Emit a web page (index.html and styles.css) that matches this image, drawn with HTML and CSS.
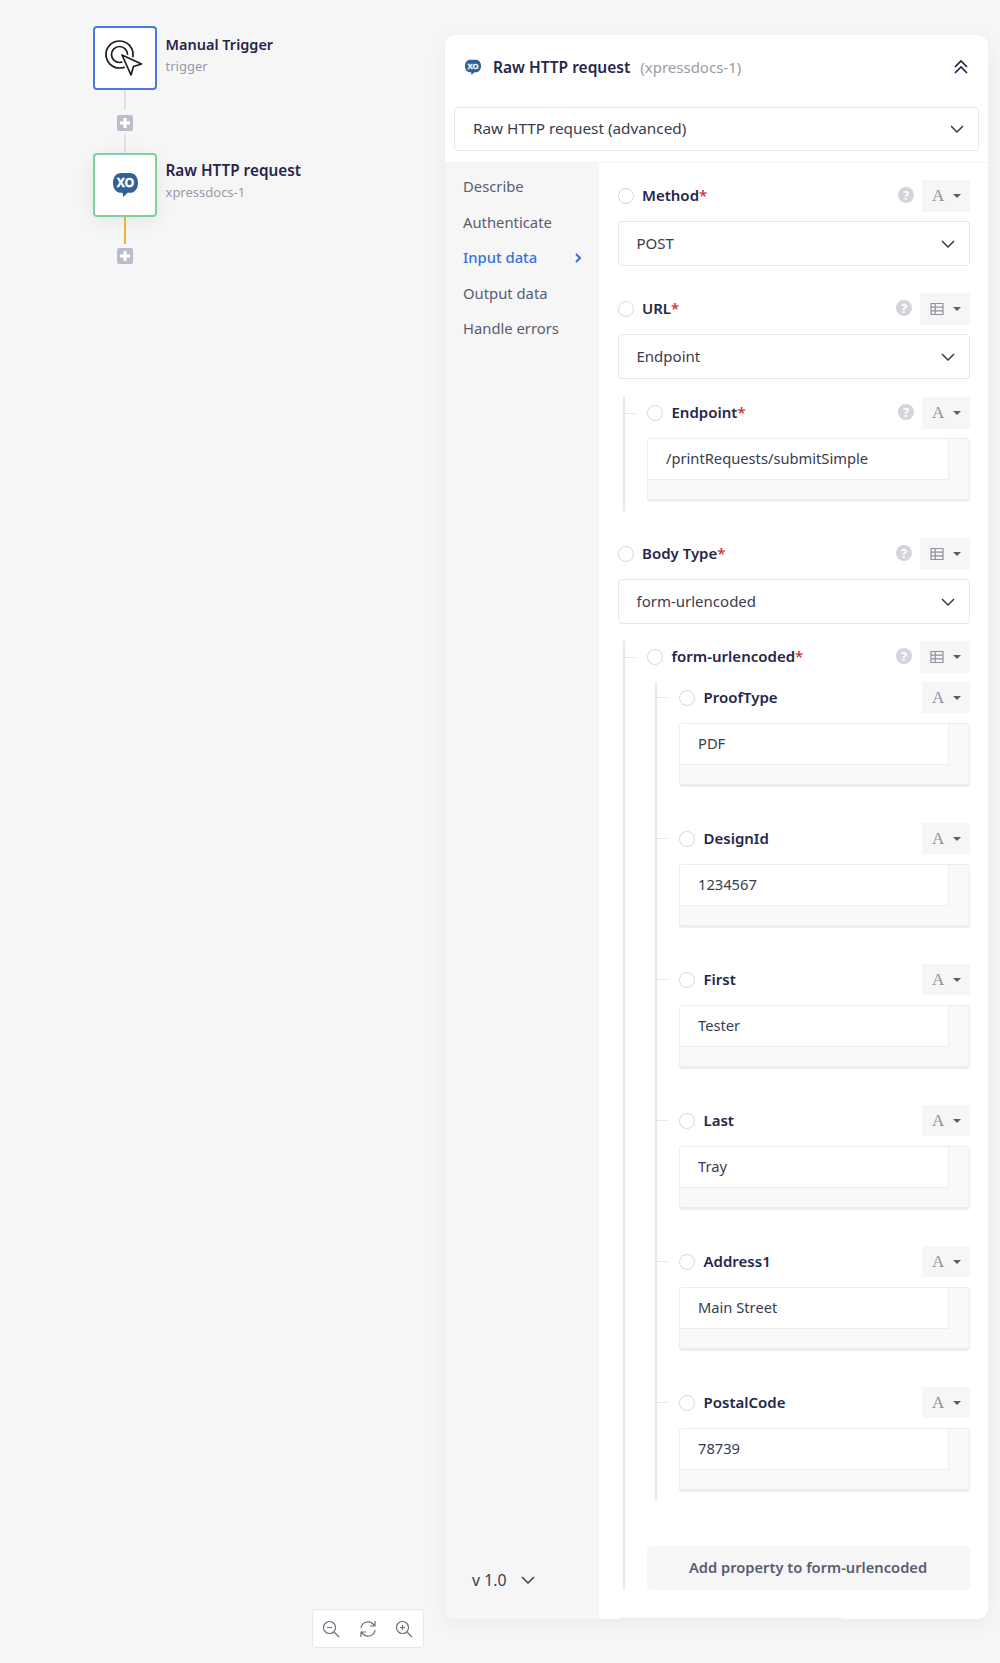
FILE: index.html
```html
<!DOCTYPE html>
<html lang="en">
<head>
    <meta charset="UTF-8">
    <title>Raw HTTP request</title>
    <link rel="stylesheet" href="styles.css">
</head>
<body>
    <!-- shared icons -->
    <svg class="defs" width="0" height="0">
        <symbol id="chevron" viewBox="0 0 14 8"><polyline points="1,1 7,7 13,1" fill="none" stroke="currentColor" stroke-width="1.5"/></symbol>
        <symbol id="grid" viewBox="0 0 14 14"><path d="M1 1.500h12v11H1zM1 5.200h12M1 8.900h12M5.200 1.500v11" fill="none" stroke="currentColor" stroke-width="1.200"/></symbol>
        <symbol id="plus" viewBox="0 0 16 16"><rect width="16" height="16" rx="2" fill="#bcbdca"/><path d="M3 8h10M8 3v10" stroke="#fff" stroke-width="3"/></symbol>
        <symbol id="bubble" viewBox="0 0 24 24"><path d="M8 1h8c5 0 8 4 8 9.500S21 20 16 20h-2l-4 4-1-4H8c-5 0-8-4-8-9.500S3 1 8 1z" fill="#2f6098"/></symbol>
    </svg>

    <div class="canvas">
        <div class="node node-trigger">
            <svg width="60" height="60" viewBox="0 0 60 60">
                <circle cx="24.500" cy="26.500" r="13.500" fill="none" stroke="#1c1c1c" stroke-width="1.700"/>
                <circle cx="24.500" cy="26.500" r="8" fill="none" stroke="#1c1c1c" stroke-width="1.700"/>
                <path d="M27 27l19.500 9-8 2.500-2.500 8.500z" fill="#fff" stroke="#fff" stroke-width="5"/>
                <path d="M27 27l19.500 9-8 2.500-2.500 8.500z" fill="#fff" stroke="#1c1c1c" stroke-width="1.700" stroke-linejoin="round"/>
            </svg>
        </div>
        <div class="node-label label-trigger">
            <strong>Manual Trigger</strong>
            <span>trigger</span>
        </div>
        <div class="link link-a"></div>
        <svg class="add add-a"><use href="#plus"/></svg>
        <div class="link link-b"></div>
        <div class="node node-http">
            <svg class="xo-big" viewBox="0 0 24 24">
                <use href="#bubble"/>
                <text x="12" y="14.500" text-anchor="middle" class="xo-text">XO</text>
            </svg>
        </div>
        <div class="node-label label-http">
            <strong>Raw HTTP request</strong>
            <span>xpressdocs-1</span>
        </div>
        <div class="link link-c"></div>
        <svg class="add add-b"><use href="#plus"/></svg>

        <div class="zoom-bar">
            <div class="zoom-btn">
                <svg width="18" height="18" viewBox="0 0 18 18"><circle cx="7.500" cy="7.500" r="6" class="ic"/><path d="M5 7.500h5M12 12l5 5" class="ic"/></svg>
            </div>
            <div class="zoom-btn">
                <svg width="18" height="18" viewBox="0 0 18 18"><path d="M2 8a7 7 0 0 1 12-4l2 2M16 10a7 7 0 0 1-12 4l-2-2M16 1v5h-5M2 17v-5h5" class="ic"/></svg>
            </div>
            <div class="zoom-btn">
                <svg width="18" height="18" viewBox="0 0 18 18"><circle cx="7.500" cy="7.500" r="6" class="ic"/><path d="M5 7.500h5M7.500 5v5M12 12l5 5" class="ic"/></svg>
            </div>
        </div>
    </div>

    <div class="panel">
        <div class="panel-head">
            <svg class="xo-small" viewBox="0 0 24 24">
                <use href="#bubble"/>
                <text x="12" y="14.500" text-anchor="middle" class="xo-text">XO</text>
            </svg>
            <span class="panel-title">Raw HTTP request</span>
            <span class="panel-sub">(xpressdocs-1)</span>
            <svg class="collapse" width="16" height="16" viewBox="0 0 16 16"><path d="M2 8l6-6 6 6M2 14l6-6 6 6" fill="none" stroke="#1f2041" stroke-width="1.600"/></svg>
        </div>
        <div class="select select-action">
            <span>Raw HTTP request (advanced)</span>
            <svg class="chev"><use href="#chevron"/></svg>
        </div>

        <div class="panel-body">
            <div class="side">
                <a class="side-item">Describe</a>
                <a class="side-item">Authenticate</a>
                <a class="side-item active">Input data
                    <svg width="6" height="10" viewBox="0 0 6 10"><polyline points="1,1 5,5 1,9" fill="none" stroke="#3272e0" stroke-width="2"/></svg>
                </a>
                <a class="side-item">Output data</a>
                <a class="side-item">Handle errors</a>
                <div class="version">v 1.0 <svg class="chev"><use href="#chevron"/></svg></div>
            </div>

            <div class="main">
                <div class="row">
                    <span class="radio"></span>
                    <span class="label">Method<i>*</i></span>
                    <span class="help">?</span>
                    <span class="type-btn"><b class="type-a">A</b><u class="caret"></u></span>
                </div>
                <div class="select select-field">
                    <span>POST</span>
                    <svg class="chev"><use href="#chevron"/></svg>
                </div>

                <div class="row row-next">
                    <span class="radio"></span>
                    <span class="label">URL<i>*</i></span>
                    <span class="help">?</span>
                    <span class="type-btn wide"><svg class="grid"><use href="#grid"/></svg><u class="caret"></u></span>
                </div>
                <div class="select select-field">
                    <span>Endpoint</span>
                    <svg class="chev"><use href="#chevron"/></svg>
                </div>

                <div class="sub sub-endpoint">
                    <div class="row">
                        <span class="tick"></span>
                        <span class="radio"></span>
                        <span class="label">Endpoint<i>*</i></span>
                        <span class="help">?</span>
                        <span class="type-btn"><b class="type-a">A</b><u class="caret"></u></span>
                    </div>
                    <div class="box box-one"><div class="box-in">/printRequests/submitSimple</div></div>
                </div>

                <div class="row row-next">
                    <span class="radio"></span>
                    <span class="label">Body Type<i>*</i></span>
                    <span class="help">?</span>
                    <span class="type-btn wide"><svg class="grid"><use href="#grid"/></svg><u class="caret"></u></span>
                </div>
                <div class="select select-field">
                    <span>form-urlencoded</span>
                    <svg class="chev"><use href="#chevron"/></svg>
                </div>

                <div class="sub sub-form">
                    <div class="row">
                        <span class="tick"></span>
                        <span class="radio"></span>
                        <span class="label">form-urlencoded<i>*</i></span>
                        <span class="help">?</span>
                        <span class="type-btn wide"><svg class="grid"><use href="#grid"/></svg><u class="caret"></u></span>
                    </div>

                    <div class="sub sub-props">
                        <div class="prop">
                            <div class="row">
                                <span class="tick"></span>
                                <span class="radio"></span>
                                <span class="label">ProofType</span>
                                <span class="type-btn push"><b class="type-a">A</b><u class="caret"></u></span>
                            </div>
                            <div class="box"><div class="box-in">PDF</div></div>
                        </div>
                        <div class="prop">
                            <div class="row">
                                <span class="tick"></span>
                                <span class="radio"></span>
                                <span class="label">DesignId</span>
                                <span class="type-btn push"><b class="type-a">A</b><u class="caret"></u></span>
                            </div>
                            <div class="box"><div class="box-in">1234567</div></div>
                        </div>
                        <div class="prop">
                            <div class="row">
                                <span class="tick"></span>
                                <span class="radio"></span>
                                <span class="label">First</span>
                                <span class="type-btn push"><b class="type-a">A</b><u class="caret"></u></span>
                            </div>
                            <div class="box"><div class="box-in">Tester</div></div>
                        </div>
                        <div class="prop">
                            <div class="row">
                                <span class="tick"></span>
                                <span class="radio"></span>
                                <span class="label">Last</span>
                                <span class="type-btn push"><b class="type-a">A</b><u class="caret"></u></span>
                            </div>
                            <div class="box"><div class="box-in">Tray</div></div>
                        </div>
                        <div class="prop">
                            <div class="row">
                                <span class="tick"></span>
                                <span class="radio"></span>
                                <span class="label">Address1</span>
                                <span class="type-btn push"><b class="type-a">A</b><u class="caret"></u></span>
                            </div>
                            <div class="box"><div class="box-in">Main Street</div></div>
                        </div>
                        <div class="prop">
                            <div class="row">
                                <span class="tick"></span>
                                <span class="radio"></span>
                                <span class="label">PostalCode</span>
                                <span class="type-btn push"><b class="type-a">A</b><u class="caret"></u></span>
                            </div>
                            <div class="box"><div class="box-in">78739</div></div>
                        </div>
                    </div>

                    <button class="add-prop">Add property to form-urlencoded</button>
                </div>

                <div class="scroll-edge"></div>
            </div>
        </div>
    </div>
</body>
</html>
```

FILE: styles.css
```css
body {
    margin: 0;
    height: 1663px;
    display: flex;
    background: #f6f6f7;
    font-family: "Noto Sans", Arial, sans-serif;
    font-size: 15px;
    color: #3a3b4f;
    overflow: hidden;
}
.defs {
    position: absolute;
}
.xo-text {
    font-family: "Liberation Sans", Arial, sans-serif;
    font-size: 11.500px;
    font-weight: 700;
    fill: #fff;
    stroke: #fff;
    stroke-width: 0.500;
}

/* flow diagram on the left */
.canvas {
    position: relative;
    width: 445px;
    flex: none;
}
.node {
    position: absolute;
    left: 93px;
    width: 64px;
    height: 64px;
    box-sizing: border-box;
    display: flex;
    align-items: center;
    justify-content: center;
    background: white;
    border-radius: 4px;
}
.node-trigger {
    top: 26px;
    border: 2px solid #4a78e8;
}
.node-http {
    top: 153px;
    border: 2px solid #7dd0a0;
    box-shadow: 0 4px 18px rgba(0, 0, 0, 0.07);
}
.xo-big {
    width: 25px;
    height: 25px;
    margin-top: -2px;
}
.node-label {
    position: absolute;
    left: 165.500px;
    white-space: nowrap;
}
.node-label strong {
    display: block;
    font-weight: 600;
    line-height: 22px;
    color: #25264a;
}
.node-label span {
    display: block;
    margin-top: 1px;
    font-size: 13px;
    line-height: 20px;
    color: #9a9aa8;
}
.label-trigger {
    top: 33px;
}
.label-trigger strong {
    font-size: 14.500px;
}
.label-http {
    top: 159px;
}
.label-http strong {
    font-size: 15.300px;
    margin-bottom: 1px;
}
.link {
    position: absolute;
    left: 124px;
    width: 2px;
    background: #e2e2e6;
}
.link-a {
    top: 90px;
    height: 20px;
}
.link-b {
    top: 134px;
    height: 19px;
}
.link-c {
    top: 217px;
    height: 27px;
    background: #f0b13c;
}
.add {
    position: absolute;
    left: 117px;
    width: 16px;
    height: 16px;
}
.add-a {
    top: 115px;
}
.add-b {
    top: 248px;
}
.zoom-bar {
    position: absolute;
    left: 312px;
    top: 1609px;
    display: flex;
    background: white;
    border: 1px solid #e8e8ec;
    border-radius: 3px;
}
.zoom-btn {
    width: 36.500px;
    height: 37px;
    display: flex;
    align-items: center;
    justify-content: center;
}
.ic {
    fill: none;
    stroke: #6c6d80;
    stroke-width: 1.200;
}

/* settings panel */
.panel {
    width: 543px;
    height: 1584px;
    margin-top: 35px;
    background: white;
    border-radius: 10px;
    box-shadow: 0 4px 20px rgba(0, 0, 0, 0.05);
    display: flex;
    flex-direction: column;
    overflow: hidden;
}
.panel-head {
    height: 63px;
    flex: none;
    padding: 0 19px 0 20px;
    display: flex;
    align-items: center;
    margin-bottom: 9px;
}
.xo-small {
    width: 16px;
    height: 16px;
    margin-right: 12px;
}
.panel-title {
    font-size: 15.500px;
    font-weight: 600;
    color: #25264a;
}
.panel-sub {
    margin-left: 10px;
    color: #9a9aa8;
}
.collapse {
    margin-left: auto;
}
.select {
    display: flex;
    align-items: center;
    justify-content: space-between;
    box-sizing: border-box;
    background: white;
    border: 1.500px solid #e6e6ec;
    border-radius: 4px;
    padding: 0 14px 0 18px;
}
.select span {
    padding-bottom: 2px;
}
.select-action {
    height: 44px;
    margin: 0 9px 11px 9px;
    flex: none;
    font-size: 15.300px;
}
.select-field {
    height: 45px;
    margin-top: 9px;
}
.chev {
    width: 14px;
    height: 8px;
    color: #3a3b4f;
}
.panel-body {
    flex: 1;
    display: flex;
    border-top: 1px solid #f2f2f4;
    min-height: 0;
}
.side {
    width: 154px;
    flex: none;
    box-sizing: border-box;
    padding: 6px 0 28px 18px;
    background: #f6f6f7;
    display: flex;
    flex-direction: column;
}
.side-item {
    height: 35.500px;
    line-height: 35.500px;
    display: flex;
    align-items: center;
    justify-content: space-between;
    padding-right: 18px;
    font-size: 14.800px;
    color: #5b5c70;
}
.side-item.active {
    color: #3272e0;
    font-weight: 500;
}
.version {
    margin-top: auto;
    margin-left: 9px;
    font-size: 15.800px;
    color: #3a3b4f;
}
.version .chev {
    margin-left: 10px;
    vertical-align: 2px;
}
.main {
    flex: 1;
    padding: 17px 18px 0 18.500px;
    display: flex;
    flex-direction: column;
}

/* one field: radio, label, help, type button */
.row {
    display: flex;
    align-items: center;
    height: 32px;
}
.row-next {
    margin-top: 27px;
}
.radio {
    width: 16px;
    height: 16px;
    box-sizing: border-box;
    flex: none;
    border: 1.500px solid #d8d8e2;
    border-radius: 50%;
    background: white;
    margin-right: 8.500px;
}
.label {
    font-weight: 600;
    color: #25264a;
    padding-bottom: 2px;
}
.label i {
    color: #d03a3a;
    font-style: normal;
}
.help {
    margin: 0 8px 2px auto;
    width: 16px;
    height: 16px;
    border-radius: 50%;
    background: #d4d4dc;
    color: white;
    font-size: 13px;
    font-weight: 700;
    line-height: 16px;
    text-align: center;
}
.type-btn {
    width: 48px;
    height: 32px;
    box-sizing: border-box;
    background: #f6f6f7;
    display: flex;
    align-items: center;
    justify-content: space-between;
    padding: 0 9px 0 10px;
    text-decoration: none;
}
.type-btn.wide {
    width: 50px;
}
.type-btn.push {
    margin-left: auto;
}
.type-a {
    font-family: "Liberation Serif", serif;
    font-size: 17px;
    font-weight: 400;
    color: #8f90a0;
}
.grid {
    width: 14px;
    height: 14px;
    color: #8f90a0;
}
.caret {
    width: 0;
    height: 0;
    border-left: 4px solid transparent;
    border-right: 4px solid transparent;
    border-top: 4px solid #5c5d70;
}

/* nested properties */
.sub {
    margin-left: 5px;
    border-left: 2px solid #e6e6ec;
}
.sub-endpoint {
    margin-top: 18px;
    padding-bottom: 9px;
}
.sub-form {
    margin-top: 17px;
}
.sub-props {
    margin-top: 9px;
    margin-left: 30px;
    padding-bottom: 8px;
}
.sub-props .row {
    height: 31px;
}
.sub-props .type-btn {
    height: 31px;
}
.tick {
    width: 11px;
    height: 1px;
    flex: none;
    background: #e6e6ec;
    margin-right: 11.500px;
}
.box {
    height: 64px;
    box-sizing: border-box;
    margin-top: 9px;
    margin-left: 22.500px;
    background: #f9f9fa;
    border: 1.500px solid #ececf1;
    border-bottom-width: 3px;
    border-radius: 4px;
}
.sub-props .box {
    margin-top: 10px;
}
.box-in {
    width: 301px;
    height: 41px;
    box-sizing: border-box;
    background: white;
    border-right: 1.500px solid #ececf1;
    border-bottom: 1.500px solid #ececf1;
    padding: 0 18px;
    font-size: 14.700px;
    line-height: 39px;
}
.sub-props .box-in {
    width: 269px;
}
.prop + .prop {
    margin-top: 36px;
}
.add-prop {
    display: block;
    width: 323px;
    height: 44px;
    margin: 46px 0 0 22px;
    padding-bottom: 3px;
    border: none;
    border-radius: 4px;
    background: #f6f6f7;
    color: #5b5c70;
    font-family: inherit;
    font-size: 14.700px;
    font-weight: 600;
}
.scroll-edge {
    width: 224px;
    height: 2px;
    margin: auto 0 0 1px;
    background: #f2f2f3;
    border-radius: 2px 2px 0 0;
}
```
